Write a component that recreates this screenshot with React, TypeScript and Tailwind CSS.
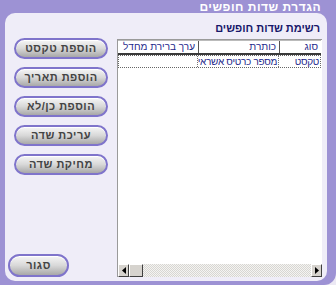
const BUTTONS = ['הוספת טקסט', 'הוספת תאריך', 'הוספת כן/לא', 'עריכת שדה', 'מחיקת שדה'];

const COLS = ['סוג', 'כותרת', 'ערך ברירת מחדל'];
const ROW = ['טקסט', 'מספר כרטיס אשראי', ''];

function PillButton({ label, className = '' }: { label: string; className?: string }) {
  return (
    <button
      dir="rtl"
      className={`flex items-center justify-center rounded-full border-2 border-[#7f74cb] bg-gradient-to-b from-[#f6f6f6] via-[#d8d8d8] to-[#a8a8a8] text-[11px] font-bold leading-none tracking-[0.5px] text-[#444] shadow-[inset_0_1px_0_#fff] ${className}`}
    >
      {label}
    </button>
  );
}

function Arrow({ dir }: { dir: 'left' | 'right' }) {
  return (
    <div className="flex h-[13px] w-[11px] items-center justify-center border border-t-white border-l-white border-b-[#404040] border-r-[#404040] bg-[#d6d3ce]">
      <svg width="4" height="7" viewBox="0 0 4 7">
        {dir === 'left' ? <path d="M4 0 L0 3.5 L4 7 Z" fill="#000" /> : <path d="M0 0 L4 3.5 L0 7 Z" fill="#000" />}
      </svg>
    </div>
  );
}

export default function App() {
  return (
    <div className="h-[285px] w-[336px] bg-[#ece9f4] font-['Liberation_Sans',Arial,sans-serif]">
      <div className="flex h-full w-full flex-col rounded-br-[12px] bg-[#9d92d4]">
        <div dir="rtl" className="flex h-[13px] items-center pr-[15px] text-[12px] font-bold leading-none tracking-[0.5px] text-white">
          הגדרת שדות חופשים
        </div>

        <div className="mb-[4px] ml-[5px] mr-[9px] flex flex-1 rounded-[10px] bg-[#efedf8]">
          {/* buttons */}
          <div className="flex w-[103px] flex-col pb-[4px] pl-[3px] pt-[25px]">
            <div className="ml-[6px] flex flex-col gap-[8px]">
              {BUTTONS.map((b) => (
                <PillButton key={b} label={b} className="h-[21px] w-[94px]" />
              ))}
            </div>
            <div className="flex-1" />
            <PillButton label="סגור" className="h-[23px] w-[61px]" />
          </div>

          {/* list */}
          <div className="ml-[9px] mr-[5px] flex flex-1 flex-col pb-[4px] pt-[8px]">
            <div dir="rtl" className="h-[15px] pr-[2px] text-[11px] font-bold leading-[15px] text-[#17176a]">
              רשימת שדות חופשים
            </div>
            <div className="mt-[3px] flex flex-1 flex-col border-l border-t border-[#9a9a9a] bg-white">
              <div dir="rtl" className="mr-[1px] grid grid-cols-[42px_81px_1fr] border-b-2 border-t border-[#3a3a3a] border-t-[#bbb] text-[10px] leading-[12px] text-[#1f2a8c]">
                {COLS.map((c, i) => (
                  <div key={c} className={`h-[12px] whitespace-nowrap px-[3px] ${i < 2 ? 'border-l border-[#555]' : ''}`}>
                    {c}
                  </div>
                ))}
              </div>
              <div dir="rtl" className="mr-[1px] grid grid-cols-[42px_81px_1fr] border border-dotted border-[#666] text-[10px] leading-[11px] tracking-[-0.3px] text-[#1f2a8c]">
                {ROW.map((c, i) => (
                  <div key={i} className={`h-[11px] whitespace-nowrap px-[1px] ${i < 2 ? 'border-l border-dotted border-[#777]' : ''}`}>
                    {c}
                  </div>
                ))}
              </div>
              <div className="flex-1" />
              <div className="flex h-[13px] items-stretch">
                <Arrow dir="left" />
                <div className="w-[14px] border border-t-white border-l-white border-b-[#404040] border-r-[#404040] bg-[#d6d3ce]" />
                <div className="flex-1 bg-[repeating-conic-gradient(#d8d6d2_0%_25%,#f4f4f2_0%_50%)] bg-[length:2px_2px]" />
                <Arrow dir="right" />
              </div>
            </div>
          </div>
        </div>
      </div>
    </div>
  );
}
